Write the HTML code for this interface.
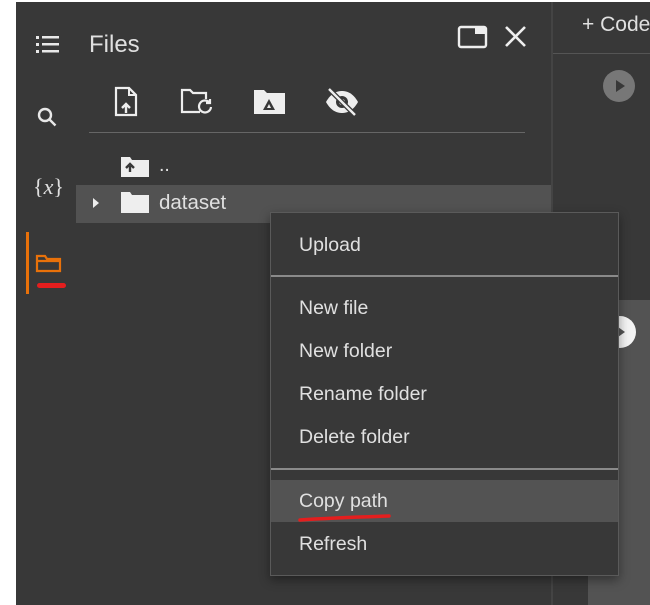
<!DOCTYPE html>
<html><head><meta charset="utf-8"><style>
*{margin:0;padding:0;box-sizing:border-box}
body{width:650px;height:605px;background:#fff;position:relative;overflow:hidden;font-family:"Liberation Sans",Arial,sans-serif;color:#e3e3e3}
.a{position:absolute}
.t{position:absolute;font-size:19.5px;color:#e0e0e0;white-space:nowrap}
</style></head><body>
<div class="a" style="left:16px;top:2px;width:634px;height:603px;background:#383838"></div>
<!-- right panel -->
<div class="a" style="left:551px;top:2px;width:2px;height:603px;background:#444"></div>
<div class="a" style="left:553px;top:53px;width:97px;height:1px;background:#555"></div>
<div class="a" style="left:588px;top:300px;width:62px;height:305px;background:#535353"></div>
<div class="t" style="left:582px;top:13px;font-size:21px">+&nbsp;Code</div>
<svg class="a" style="left:603px;top:70px" width="32" height="32"><circle cx="16" cy="16" r="16" fill="#777"/><path d="M13 10v12l9-6z" fill="#383838"/></svg>
<svg class="a" style="left:600px;top:315px" width="36" height="36"><circle cx="20" cy="17" r="16" fill="#f4f4f4"/><path d="M18 12v10l7-5z" fill="#555"/></svg>
<!-- sidebar icons -->
<svg class="a" style="left:35px;top:34px" width="26" height="22" fill="#e8e8e8"><rect x="1" y="2" width="3" height="3"/><rect x="7" y="2" width="17" height="2.5"/><rect x="1" y="9" width="3" height="3"/><rect x="7" y="9" width="17" height="2.5"/><rect x="1" y="16" width="3" height="3"/><rect x="7" y="16" width="17" height="2.5"/></svg>
<svg class="a" style="left:36px;top:106px" width="24" height="24" fill="none" stroke="#e8e8e8" stroke-width="2.4"><circle cx="9" cy="9" r="6"/><path d="M13.5 13.5l6 6"/></svg>
<div class="t" style="left:33px;top:174px;font-family:'Liberation Serif',serif;font-size:22px">{<i>x</i>}</div>
<div class="a" style="left:26px;top:232px;width:3px;height:62px;background:#e8710a"></div>
<svg class="a" style="left:35px;top:252px" width="28" height="22" fill="none" stroke="#e8710a" stroke-width="2.2"><path d="M2 4h8l2 3h13v12H2z M2 9h23"/></svg>
<div class="a" style="left:37px;top:283px;width:29px;height:5px;border-radius:3px;background:#e41e1e"></div>
<!-- header -->
<div class="t" style="left:89px;top:31px;font-size:24px">Files</div>
<svg class="a" style="left:457px;top:24px" width="32" height="26" fill="none" stroke="#eee" stroke-width="2.4"><rect x="2" y="3" width="27" height="20" rx="2"/><rect x="18" y="3" width="11" height="7" fill="#eee" stroke="none"/></svg>
<svg class="a" style="left:503px;top:24px" width="26" height="26" stroke="#eee" stroke-width="2.6"><path d="M3 3l19 19M22 3L3 22"/></svg>
<!-- toolbar -->
<svg class="a" style="left:113px;top:86px" width="28" height="32"><path d="M3 2h13l7 7v20H3z" fill="none" stroke="#eee" stroke-width="2.2"/><path d="M16 2v7h7" fill="none" stroke="#eee" stroke-width="2"/><path d="M13 27v-8M9 22l4-4 4 4" fill="none" stroke="#eee" stroke-width="2.4"/></svg>
<svg class="a" style="left:180px;top:88px" width="34" height="28" fill="none" stroke="#eee" stroke-width="2.2"><path d="M20 24H2V2h8l3 3h13v6"/><path d="M31 19a6 6 0 1 1-2-5M30 11v4h-4"/></svg>
<svg class="a" style="left:253px;top:88px" width="34" height="28"><path d="M1 2h10l3 3h18v21H1z" fill="#eee"/><path d="M10 22l6-11 6 11z" fill="#383838"/><path d="M14 20l2-4 2 4z" fill="#eee"/></svg>
<svg class="a" style="left:323px;top:86px" width="40" height="32"><path d="M3 16c5-9 11-11 16-11s11 2 16 11c-5 9-11 11-16 11S8 25 3 16z" fill="#eee"/><circle cx="19" cy="16" r="6" fill="#383838"/><circle cx="19" cy="16" r="3" fill="#eee"/><path d="M6 3l26 26" stroke="#383838" stroke-width="5"/><path d="M6 3l26 26" stroke="#eee" stroke-width="2.4"/></svg>
<div class="a" style="left:89px;top:132px;width:436px;height:1px;background:#666"></div>
<!-- tree -->
<svg class="a" style="left:121px;top:155px" width="28" height="22"><path d="M0 2h9l2 3h17v17H0z" fill="#eee"/><path d="M9 17v-6M5 13l4-4 4 4" stroke="#383838" stroke-width="2.4" fill="none"/></svg>
<div class="t" style="left:159px;top:154px">..</div>
<div class="a" style="left:76px;top:185px;width:475px;height:38px;background:#525252"></div>
<svg class="a" style="left:92px;top:197px" width="8" height="12"><path d="M1 1l6 5-6 5z" fill="#eee"/></svg>
<svg class="a" style="left:121px;top:190px" width="28" height="24"><path d="M0 2h9l2 3h17v18H0z" fill="#eee"/></svg>
<div class="t" style="left:159px;top:191px;font-size:20.5px">dataset</div>
<!-- menu -->
<div class="a" style="left:270px;top:212px;width:349px;height:364px;background:#383838;border:1px solid #5a5a5a;box-shadow:0 4px 10px rgba(0,0,0,.4)"></div>
<div class="a" style="left:271px;top:275px;width:347px;height:2px;background:#8a8a8a"></div>
<div class="a" style="left:271px;top:468px;width:347px;height:2px;background:#8a8a8a"></div>
<div class="a" style="left:271px;top:480px;width:347px;height:42px;background:#535353"></div>
<div class="t" style="left:299px;top:234px">Upload</div>
<div class="t" style="left:299px;top:297px">New file</div>
<div class="t" style="left:299px;top:340px">New folder</div>
<div class="t" style="left:299px;top:383px">Rename folder</div>
<div class="t" style="left:299px;top:426px">Delete folder</div>
<div class="t" style="left:299px;top:490px">Copy path</div>
<div class="t" style="left:299px;top:533px">Refresh</div>
<svg class="a" style="left:297px;top:512px" width="96" height="12"><path d="M3 8C30 6 60 5 92 4" stroke="#e41e1e" stroke-width="3.5" fill="none" stroke-linecap="round"/></svg>
</body></html>
